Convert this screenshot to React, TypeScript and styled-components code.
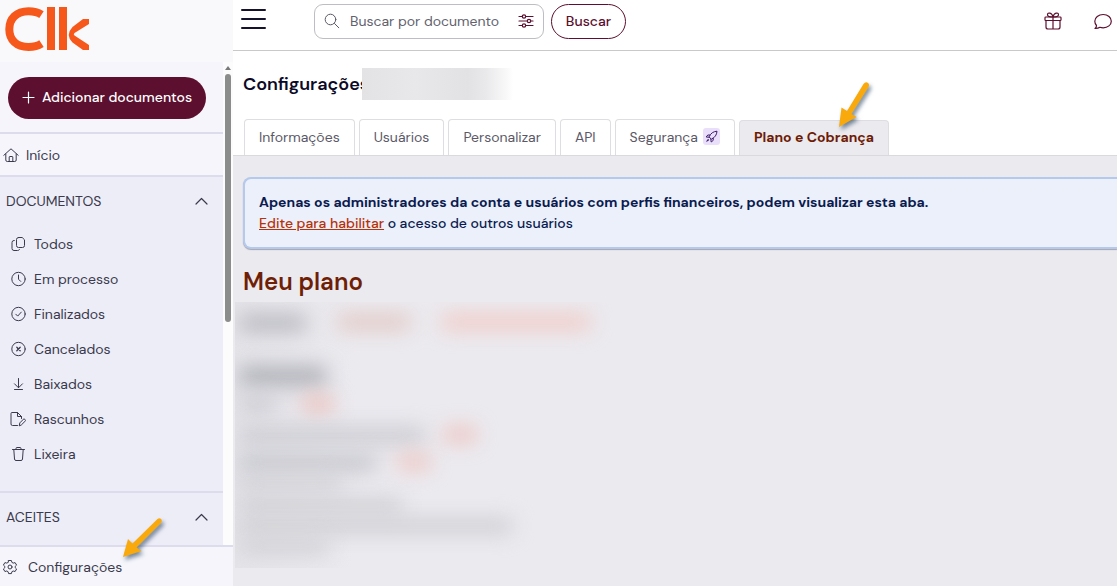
import React from "react";
import styled, { createGlobalStyle, css } from "styled-components";

const GlobalStyle = createGlobalStyle`
  *, *::before, *::after { box-sizing: border-box; }
  body { margin: 0; background: #ebeaef; }
  body, button, input { font-family: "DM Sans", Inter, "Open Sans", sans-serif; font-size: 14px; }
  button { cursor: pointer; }
  h1, h2, p, ul { margin: 0; padding: 0; }
  svg { display: block; flex: none; }
`;

const colors = {
  wine: "#5c0f2e",
  ink: "#3b3a4d",
  rule: "#dcdcec",
  arrow: "#f9a90c",
};

const Shell = styled.div`
  display: flex;
  min-height: 100vh;
`;

const Sidebar = styled.aside`
  display: flex;
  flex-direction: column;
  flex: 0 0 233px;
  background: #f5f5fb;
  color: ${colors.ink};
`;

const Brand = styled.a`
  display: block;
  height: 62px;
  padding: 7px 5px;
  background: #f9f9fc;
`;

const ScrollArea = styled.div`
  display: flex;
  flex: 1;
`;

const Nav = styled.nav`
  display: flex;
  flex-direction: column;
  flex: 1;
`;

const Track = styled.div`
  display: flex;
  flex-direction: column;
  align-items: center;
  gap: 4px;
  width: 10px;
  padding-top: 4px;
  background: #fcfcfd;
`;

const Thumb = styled.div`
  width: 6px;
  height: 248px;
  border-radius: 3px;
  background: #8b8d8d;
`;

const AddBar = styled.div`
  padding: 15px 17px 13px 8px;
  border-bottom: 2px solid ${colors.rule};
`;

const AddButton = styled.button`
  display: flex;
  align-items: center;
  justify-content: center;
  gap: 7px;
  width: 100%;
  height: 42px;
  padding: 0 0 2px;
  border: 0;
  border-radius: 21px;
  background: ${colors.wine};
  color: #fff;
  font-weight: 500;
`;

const HomeLink = styled.a`
  display: flex;
  align-items: center;
  gap: 7px;
  height: 41px;
  padding-left: 3px;
  color: inherit;
  text-decoration: none;
`;

const Group = styled.section<{ $grow?: boolean }>`
  padding-bottom: ${(p) => (p.$grow ? 0 : 20)}px;
  border-top: 2px solid ${colors.rule};
  background: #ededf7;
  ${(p) => p.$grow && css`flex: 1;`}
`;

const GroupToggle = styled.button`
  display: flex;
  align-items: center;
  justify-content: space-between;
  width: 100%;
  height: 48px;
  padding: 0 15px 0 6px;
  border: 0;
  background: none;
  color: inherit;
`;

const Items = styled.ul`
  padding-top: 1px;
  list-style: none;
`;

const ItemLink = styled.a`
  display: flex;
  align-items: center;
  gap: 8px;
  height: 35px;
  padding-left: 10px;
  color: inherit;
  text-decoration: none;
`;

const SettingsLink = styled.a`
  position: relative;
  display: flex;
  align-items: center;
  gap: 10px;
  height: 41px;
  padding-left: 2px;
  border-top: 2px solid ${colors.rule};
  color: inherit;
  text-decoration: none;
`;

const Main = styled.main`
  display: flex;
  flex-direction: column;
  flex: 1;
  min-width: 0;
`;

const TopBar = styled.header`
  display: flex;
  align-items: center;
  height: 51px;
  padding: 0 5px 8px 7px;
  border-bottom: 1px solid #c9c9cb;
  background: #fff;
`;

const IconButton = styled.button`
  padding: 0;
  border: 0;
  background: none;
  color: ${colors.wine};
`;

const MenuButton = styled(IconButton)`
  padding-bottom: 4px;
`;

const SearchForm = styled.form`
  display: flex;
  gap: 7px;
  margin-left: 47px;
`;

const SearchBox = styled.label`
  display: flex;
  align-items: center;
  gap: 10px;
  width: 230px;
  height: 35px;
  padding: 0 9px;
  border: 1px solid #bdbdc3;
  border-radius: 9px;
  color: #5a5a66;
`;

const SearchInput = styled.input`
  flex: 1;
  min-width: 0;
  padding: 0;
  border: 0;
  outline: 0;
  background: none;
  &::placeholder { color: #62626e; opacity: 1; }
`;

const SearchButton = styled.button`
  width: 75px;
  height: 35px;
  padding: 0;
  border: 1px solid ${colors.wine};
  border-radius: 18px;
  background: #fff;
  color: ${colors.wine};
  font-weight: 500;
`;

const Actions = styled.div`
  display: flex;
  gap: 32px;
  margin-left: auto;
`;

const PageHead = styled.div`
  padding: 17px 0 0 10px;
  border-bottom: 1px solid #d9d9de;
  background: #fff;
`;

const TitleRow = styled.div`
  position: relative;
  display: flex;
  align-items: center;
  height: 32px;
`;

const Title = styled.h1`
  color: #0c0a26;
  font-size: 18px;
  line-height: 24px;
  font-weight: 600;
`;

const Redaction = styled.div`
  position: absolute;
  top: 0;
  left: 119px;
  width: 151px;
  height: 32px;
  background: linear-gradient(90deg, #e3e3e5, #e8e8ea 35%, #e2e2e4 70%, #e9e9eb 82%, #f9f9fa 96%, #fff);
`;

const Tabs = styled.div`
  display: flex;
  align-items: flex-end;
  gap: 4px;
  margin: 19px 0 0 1px;
`;

const Tab = styled.button<{ $active?: boolean }>`
  position: relative;
  display: flex;
  align-items: center;
  gap: 5px;
  height: 36px;
  padding: 0 14px 2px;
  border: 1px solid #dedee2;
  border-bottom: 0;
  border-radius: 4px 4px 0 0;
  background: #fff;
  color: #5b5967;
  white-space: nowrap;
  ${(p) =>
    p.$active &&
    css`
      height: 35px;
      background: #ebeaef;
      color: #6e1b06;
      font-weight: 700;
    `}
`;

const RocketBadge = styled.span`
  display: grid;
  place-items: center;
  width: 17px;
  height: 17px;
  border-radius: 3px;
  background: #eadffa;
  color: #3d1c6b;
`;

const Content = styled.div`
  padding: 21px 0 16px 10px;
`;

const Notice = styled.div`
  padding: 13px 14px;
  border: 2px solid #b4c9ec;
  border-right: 0;
  border-radius: 8px 0 0 8px;
  background: #ebf0fb;
  box-shadow: 0 1px 1px rgba(60, 60, 80, 0.4);
  color: #0b1b4f;
  line-height: 21px;
  font-weight: 500;
  a { color: #b83208; }
`;

const NoticeLead = styled.p`
  font-weight: 700;
`;

const Heading = styled.h2`
  margin-top: 17px;
  color: #6e1f06;
  font-size: 24px;
  line-height: 32px;
  font-weight: 600;
`;

const Blurred = styled.div`
  display: flex;
  flex-direction: column;
  max-width: 400px;
  height: 266px;
  margin: 4px 0 0 -8px;
  padding-left: 4px;
  overflow: hidden;
  background: linear-gradient(90deg, #e4e4e9, #ebeaef 30%);
`;

const BlurRow = styled.div<{ $top: number; $gap: number }>`
  display: flex;
  gap: ${(p) => p.$gap}px;
  margin-top: ${(p) => p.$top}px;
  filter: blur(10px);
`;

const Smudge = styled.span<{ $w: number; $h: number; $tone: string }>`
  width: ${(p) => p.$w}px;
  height: ${(p) => p.$h}px;
  border-radius: 6px;
  background: ${(p) => p.$tone};
`;

const ArrowMark = styled.svg<{ $left: number; $top: number }>`
  position: absolute;
  left: ${(p) => p.$left}px;
  top: ${(p) => p.$top}px;
  overflow: visible;
  pointer-events: none;
  filter: drop-shadow(2px 3px 2px rgba(30, 60, 90, 0.6));
`;

type IconProps = { size?: number; stroke?: number; children: React.ReactNode };

const Icon = ({ size = 16, stroke = 1, children }: IconProps) => (
  <svg
    width={size}
    height={size}
    viewBox={`0 0 ${size} ${size}`}
    fill="none"
    stroke="currentColor"
    strokeWidth={stroke}
    strokeLinecap="round"
    strokeLinejoin="round"
    aria-hidden="true"
  >
    {children}
  </svg>
);

const Chevron = () => (
  <Icon size={13} stroke={1.2}><path d="M1 9 6.5 3.5 12 9" /></Icon>
);

const documents = [
  {
    label: "Todos",
    icon: <path d="M8.500 1.500h3.700l2.300 2.300v5.700a2 2 0 0 1-2 2h-4a2 2 0 0 1-2-2v-6a2 2 0 0 1 2-2zM4.300 4.500H4a2 2 0 0 0-2 2v6a2 2 0 0 0 2 2h3.500a2 2 0 0 0 2-1" />,
  },
  {
    label: "Em processo",
    icon: <><circle cx="8.5" cy="8" r="6.7" /><path d="M8.5 4v4.2l2.2 2.2" /></>,
  },
  {
    label: "Finalizados",
    icon: <><circle cx="8.5" cy="8" r="6.7" /><path d="m5.8 8.2 1.9 1.9 3.6-4" /></>,
  },
  {
    label: "Cancelados",
    icon: <><circle cx="8.5" cy="8" r="6.7" /><path d="m6.8 6.3 3.4 3.4m0-3.4L6.8 9.7" strokeWidth="1.3" /></>,
  },
  {
    label: "Baixados",
    icon: <path d="M8.5 2.5v9M4.5 7.8l4 4 4-4M4.5 13.5h8" />,
  },
  {
    label: "Rascunhos",
    icon: <><path d="M7.500 14.500h-5A1.500 1.500 0 0 1 1 13V2.500a1 1 0 0 1 1-1h5.500l4 4v2M7.500 1.500v4h4" /><path d="m9.300 14.500.5-2.600 4.200-4.200 1.800 1.800-4.200 4.200z" /></>,
  },
  {
    label: "Lixeira",
    icon: <path d="M2.500 3.500h12M6 3.500v-1q0-1 1-1h3q1 0 1 1v1M3.800 3.500l.7 9.500q.1 1.500 1.500 1.500h5q1.400 0 1.500-1.500l.7-9.500" />,
  },
];

const Logo = () => (
  <svg width="85" height="45" viewBox="0 0 85 45" fill="none" stroke="#f6581c" strokeWidth="8" role="img" aria-label="Clk">
    <path d="M36.500 7.600C32.500 5 28.500 4.300 23.500 4.300 11.500 4.300 4.300 11.500 4.300 22.200S11.500 40 23.500 40c5 0 9-.7 13-3.300" />
    <path d="M46 0v43M58 0v43" />
    <path d="M84 12v5L69.500 26Q68 27.200 69.500 28.500L84 38v5h-6L67.500 35.500Q60 28 67.500 20L78 12z" fill="#f6581c" stroke="none" />
  </svg>
);

const gear = (
  <>
    <circle cx="8" cy="8" r="2" />
    <path d="M6.600 1.500h2.800l.5 1.900 1.300.7 1.900-.5 1.500 2.500-1.400 1.300v1.300l1.400 1.300-1.500 2.500-1.900-.5-1.300.7-.5 1.900H6.600l-.5-1.900-1.300-.7-1.900.5L1.400 10l1.400-1.300V7.400L1.400 6.100l1.500-2.500 1.900.5 1.300-.7z" />
  </>
);

const bars = [
  { top: 12, gap: 30, items: [[68, 18, "#b9b9c0"], [74, 16, "#e2c8c4"], [150, 16, "#f1cbc6"]] },
  { top: 34, gap: 0, items: [[88, 20, "#b0b1b8"]] },
  { top: 10, gap: 25, items: [[38, 16, "#cbcbd1"], [32, 16, "#edbfba"]] },
  { top: 15, gap: 18, items: [[186, 17, "#cbcbd1"], [34, 15, "#eec2be"]] },
  { top: 10, gap: 20, items: [[138, 18, "#c6c7cd"], [34, 16, "#eec6c2"]] },
  { top: 4, gap: 0, items: [[104, 14, "#d0d0d5"]] },
  { top: 8, gap: 0, items: [[164, 16, "#cfcfd4"]] },
  { top: 4, gap: 0, items: [[274, 16, "#cfcfd4"]] },
  { top: 5, gap: 0, items: [[90, 15, "#d0d0d5"]] },
] as { top: number; gap: number; items: [number, number, string][] }[];

export default function App() {
  return (
    <Shell>
      <GlobalStyle />
      <Sidebar>
        <Brand href="#"><Logo /></Brand>
        <ScrollArea>
          <Nav>
            <AddBar>
              <AddButton type="button">
                <Icon size={13} stroke={1.2}><path d="M6.500 1v11M1 6.500h11" /></Icon>
                Adicionar documentos
              </AddButton>
            </AddBar>
            <HomeLink href="#">
              <Icon>
                <path d="M.8 8.300 8 1.800l7.200 6.500M2.800 7v6q0 1.500 1.500 1.500h7.400q1.500 0 1.500-1.500V7" />
                <path d="M6.200 14.500V10q0-.5.500-.5h2.600q.5 0 .5.500v4.500" />
              </Icon>
              Início
            </HomeLink>
            <Group>
              <GroupToggle type="button" aria-expanded="true">DOCUMENTOS<Chevron /></GroupToggle>
              <Items>
                {documents.map((d) => (
                  <li key={d.label}>
                    <ItemLink href="#"><Icon>{d.icon}</Icon>{d.label}</ItemLink>
                  </li>
                ))}
              </Items>
            </Group>
            <Group $grow>
              <GroupToggle type="button" aria-expanded="true">ACEITES<Chevron /></GroupToggle>
            </Group>
          </Nav>
          <Track aria-hidden="true">
            <svg width="6" height="4" viewBox="0 0 6 4" fill="#77797b"><path d="M3 0 6 4H0z" /></svg>
            <Thumb />
          </Track>
        </ScrollArea>
        <SettingsLink href="#">
          <Icon>{gear}</Icon>
          Configurações
          <ArrowMark $left={123} $top={-29} width="39" height="39" viewBox="0 0 39 39" fill={colors.arrow} aria-hidden="true">
            <path d="M0 39 5 21 9.500 25.500 34.500 1q2-1.500 3.500 0t0 4L13.500 29.500 18.500 33z" />
          </ArrowMark>
        </SettingsLink>
      </Sidebar>

      <Main>
        <TopBar>
          <MenuButton type="button" aria-label="Menu">
            <svg width="27" height="22" viewBox="0 0 27 22" stroke="#15132b" strokeWidth="2" strokeLinecap="round"><path d="M2 2h23M2 11h23M2 20h23" /></svg>
          </MenuButton>
          <SearchForm onSubmit={(e) => e.preventDefault()}>
            <SearchBox>
              <Icon><circle cx="6.500" cy="6.500" r="5.300" /><path d="m10.500 10.500 4.300 4.300" /></Icon>
              <SearchInput type="text" aria-label="Buscar por documento" placeholder="Buscar por documento" />
              <IconButton type="button" aria-label="Filtros">
                <Icon stroke={1.2}>
                  <path d="M1 3.500h3M8 3.500h7M1 8h8M13 8h2M1 12.500h3M8 12.500h7" />
                  <circle cx="6" cy="3.500" r="1.700" /><circle cx="11" cy="8" r="1.700" /><circle cx="6" cy="12.500" r="1.700" />
                </Icon>
              </IconButton>
            </SearchBox>
            <SearchButton type="submit">Buscar</SearchButton>
          </SearchForm>
          <Actions>
            <IconButton type="button" aria-label="Novidades">
              <Icon size={18} stroke={1.2}>
                <rect x="1" y="5" width="16" height="3.500" rx=".8" />
                <path d="M2 8.500V15q0 2 2 2h10q2 0 2-2V8.500M9 5v12M9 5C6 5 3.500 4.500 3.500 2.700 3.500.2 8 .2 9 5c1-4.800 5.500-4.800 5.500-2.300C14.500 4.500 12 5 9 5" />
              </Icon>
            </IconButton>
            <IconButton type="button" aria-label="Mensagens">
              <Icon size={18} stroke={1.2}>
                <path d="M1 16.500c1-.8 1.500-1.800 1.500-3C1.500 12.300.8 10.900.8 9.200.8 5.500 4.500 2.500 9.200 2.500s8.100 3 8.100 6.700-3.600 6.600-8.100 6.600c-1.200 0-2.300-.2-3.300-.5-1.300.9-3 1.300-4.900 1.200z" />
              </Icon>
            </IconButton>
          </Actions>
        </TopBar>

        <PageHead>
          <TitleRow>
            <Title>Configurações</Title>
            <Redaction aria-hidden="true" />
          </TitleRow>
          <Tabs role="tablist">
            <Tab type="button" role="tab">Informações</Tab>
            <Tab type="button" role="tab">Usuários</Tab>
            <Tab type="button" role="tab">Personalizar</Tab>
            <Tab type="button" role="tab">API</Tab>
            <Tab type="button" role="tab">
              Segurança
              <RocketBadge>
                <Icon size={13}>
                  <path d="M4.200 6.500C5.800 3.200 8.200 1.500 12 1.200c-.3 3.800-2 6.200-5.300 7.800zM5 5H2.800L1.200 7l3 .3M8.200 8.200v2.200L6.200 12l-.4-3M3.200 9.300l-1.500 2 2-1.300" />
                </Icon>
              </RocketBadge>
            </Tab>
            <Tab type="button" role="tab" aria-selected="true" $active>
              Plano e Cobrança
              <ArrowMark $left={99} $top={-40} width="30" height="46" viewBox="0 0 30 46" fill={colors.arrow} aria-hidden="true">
                <path d="M0 46 2.500 26.500 8 30 24.500 3q2-2.500 4.200-1.200T29.500 6L12.500 33 17.500 36z" />
              </ArrowMark>
            </Tab>
          </Tabs>
        </PageHead>

        <Content role="tabpanel">
          <Notice>
            <NoticeLead>
              Apenas os administradores da conta e usuários com perfis financeiros, podem visualizar esta aba.
            </NoticeLead>
            <p><a href="#">Edite para habilitar</a> o acesso de outros usuários</p>
          </Notice>
          <Heading>Meu plano</Heading>
          <Blurred aria-hidden="true">
            {bars.map((row, i) => (
              <BlurRow key={i} $top={row.top} $gap={row.gap}>
                {row.items.map(([w, h, tone], j) => <Smudge key={j} $w={w} $h={h} $tone={tone} />)}
              </BlurRow>
            ))}
          </Blurred>
        </Content>
      </Main>
    </Shell>
  );
}
